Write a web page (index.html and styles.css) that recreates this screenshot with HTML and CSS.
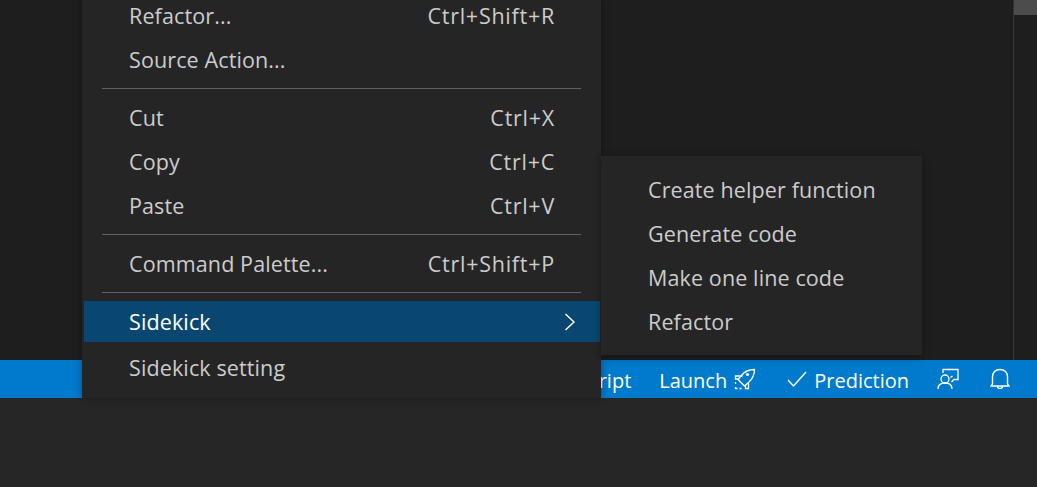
FILE: index.html
```html
<!DOCTYPE html>
<html lang="en">
<head>
<meta charset="utf-8">
<title>Sidekick context menu</title>
<link rel="stylesheet" href="styles.css">
</head>
<body>
<div class="window">
  <div class="editor"><div class="scrollbar"><div class="thumb"></div></div></div>
  <footer class="statusbar">
    <span class="status-item">JavaScript</span>
    <span class="status-item launch">Launch
      <svg class="icon" width="22" height="22" viewBox="0 0 22 22" fill="none" stroke="#fff" stroke-width="1.300"><path d="M20.500 1.500C15 1.500 10.500 3.500 7.500 7.500L4 11.500L10.500 18L14.500 14.500C18.500 11 20.500 7 20.500 1.500Z"/><circle cx="13.500" cy="6.500" r="1.600" fill="#fff" stroke="none"/><path d="M11.500 17V20.500H14.500V14.500M8.500 8H1.500V11H4M1.500 14V16M1.500 19V20.500H3.500M5.500 20.500H7.500"/></svg>
    </span>
    <span class="status-item prediction">
      <svg class="icon" width="20" height="16" viewBox="0 0 20 16" fill="none" stroke="#fff" stroke-width="1.400"><path d="M1 9L6.500 15L19 1"/></svg>
      Prediction
    </span>
    <span class="status-item feedback">
      <svg class="icon" width="22" height="22" viewBox="0 0 22 22" fill="none" stroke="#fff" stroke-width="1.300"><path d="M6 5V1.500H21V11.500H17L14.500 14"/><circle cx="8" cy="11" r="4"/><path d="M1 21C1 17 4 15 8 15C12 15 15 17 15 21M13.500 9.500L15.500 8"/></svg>
    </span>
    <span class="status-item bell">
      <svg class="icon" width="20" height="22" viewBox="0 0 20 22" fill="none" stroke="#fff" stroke-width="1.400"><path d="M2.500 16V9C2.500 4.500 5.500 1.500 10 1.500C14.500 1.500 17.500 4.500 17.500 9V16L19 18H1L2.500 16Z"/><path d="M7.500 18.500C7.500 21 12.500 21 12.500 18.500"/></svg>
    </span>
  </footer>
  <div class="below"></div>

  <nav class="menu">
    <div class="row"><span>Refactor...</span><span class="keys">Ctrl+Shift+R</span></div>
    <div class="row"><span>Source Action...</span></div>
    <hr class="sep">
    <div class="row"><span>Cut</span><span class="keys">Ctrl+X</span></div>
    <div class="row"><span>Copy</span><span class="keys">Ctrl+C</span></div>
    <div class="row"><span>Paste</span><span class="keys">Ctrl+V</span></div>
    <hr class="sep">
    <div class="row"><span>Command Palette...</span><span class="keys">Ctrl+Shift+P</span></div>
    <hr class="sep">
    <div class="row active"><span>Sidekick</span>
      <svg class="chevron" width="12" height="18" viewBox="0 0 12 18" fill="none" stroke="#fff" stroke-width="1.400"><path d="M1.500 1L10 9L1.500 17"/></svg>
    </div>
    <div class="row last"><span>Sidekick setting</span></div>
  </nav>

  <nav class="submenu">
    <div class="subrow">Create helper function</div>
    <div class="subrow">Generate code</div>
    <div class="subrow">Make one line code</div>
    <div class="subrow">Refactor</div>
  </nav>
</div>
</body>
</html>
```
FILE: styles.css
```css
* { box-sizing: border-box; }
html, body { margin: 0; height: 100%; overflow: hidden; }
body {
  font-family: "Open Sans", "Noto Sans", sans-serif;
  font-size: 21.5px;
  letter-spacing: .12px;
  background: #262626;
  color: #ccc;
}
.window {
  position: relative;
  width: 1037px;
  height: 487px;
  display: flex;
  flex-direction: column;
}
.editor {
  height: 360px;
  background: #1e1e1e;
  display: flex;
  justify-content: flex-end;
}
.scrollbar {
  width: 24px;
  border-left: 1px solid #333;
}
.thumb {
  height: 15px;
  background: #4c4c4c;
}
.statusbar {
  height: 38px;
  padding: 2px 27px 0 0;
  background: #007acc;
  color: #fff;
  font-size: 20px;
  letter-spacing: 0;
  display: flex;
  justify-content: flex-end;
  align-items: center;
}
.status-item {
  display: flex;
  align-items: center;
  white-space: nowrap;
}
.launch { margin-left: 28px; gap: 7px; }
.prediction { margin-left: 31px; gap: 7px; }
.feedback { margin-left: 28px; }
.bell { margin-left: 31px; }
.icon { margin-top: -3px; }
.below { flex: 1; background: #262626; }

.menu {
  position: absolute;
  left: 82px;
  top: -5px;
  width: 519px;
  height: 403px;
  padding-left: 2px;
  padding-right: 1px;
  background: #252526;
  box-shadow: 0 0 8px rgba(0,0,0,.35);
}
.row {
  height: 41px;
  margin-bottom: 3px;
  padding: 0 45px 0 45px;
  display: flex;
  justify-content: space-between;
  align-items: center;
}
.keys { letter-spacing: .75px; }
.row.active {
  background: #094771;
  color: #fff;
  padding-right: 24px;
}
.row.last { margin-top: 5px; }
.sep {
  height: 1px;
  margin: 8px 19px 8px 18px;
  border: 0;
  background: #606060;
}
.submenu {
  position: absolute;
  left: 601px;
  top: 156px;
  width: 321px;
  height: 199px;
  padding: 11px 0 0 47px;
  background: #252526;
  box-shadow: 0 2px 8px rgba(0,0,0,.36);
}
.subrow {
  height: 44px;
  display: flex;
  align-items: center;
  white-space: nowrap;
}
```
